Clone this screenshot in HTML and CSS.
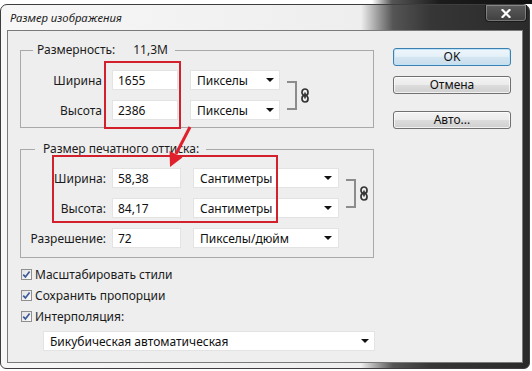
FILE: index.html
```html
<!DOCTYPE html>
<html lang="ru">
<head>
<meta charset="utf-8">
<title>Размер изображения</title>
<link rel="stylesheet" href="styles.css">
</head>
<body>
<div class="window">
  <div class="titlebar">
    <div class="title">Размер изображения</div>
    <div class="close"><svg width="10" height="9" viewBox="0 0 10 9"><path d="M1.5 1 L8.5 8 M8.5 1 L1.5 8" stroke="#fff" stroke-width="2.2" stroke-linecap="square"/></svg></div>
  </div>
  <div class="client">
    <div class="left">
      <fieldset class="group g1">
        <legend class="leg1">Размерность:<span class="val">11,3M</span></legend>
        <div class="grid grid1">
          <div class="lbl lbl-nc">Ширина</div>
          <input class="field f1" value="1655">
          <div class="select s1"><span>Пикселы</span><i class="arrow"></i></div>
          <div class="link l1"><div class="bracket"></div><svg class="chain" width="8" height="15" viewBox="0 0 8 15"><rect x="1" y="1" width="6" height="6.6" rx="3" fill="none" stroke="#333" stroke-width="1.7"/><rect x="1" y="7.4" width="6" height="6.6" rx="3" fill="none" stroke="#333" stroke-width="1.7"/><path d="M4 4.5 V10.5" stroke="#333" stroke-width="1.6"/></svg></div>
          <div class="lbl lbl-nc">Высота</div>
          <input class="field f1" value="2386">
          <div class="select s1"><span>Пикселы</span><i class="arrow"></i></div>
        </div>
      </fieldset>
      <fieldset class="group g2">
        <legend class="leg2">Размер печатного оттиска:</legend>
        <div class="grid grid2">
          <div class="lbl">Ширина:</div>
          <input class="field f2" value="58,38">
          <div class="select s2"><span>Сантиметры</span><i class="arrow"></i></div>
          <div class="link l2"><div class="bracket"></div><svg class="chain" width="8" height="15" viewBox="0 0 8 15"><rect x="1" y="1" width="6" height="6.6" rx="3" fill="none" stroke="#333" stroke-width="1.7"/><rect x="1" y="7.4" width="6" height="6.6" rx="3" fill="none" stroke="#333" stroke-width="1.7"/><path d="M4 4.5 V10.5" stroke="#333" stroke-width="1.6"/></svg></div>
          <div class="lbl">Высота:</div>
          <input class="field f2" value="84,17">
          <div class="select s2"><span>Сантиметры</span><i class="arrow"></i></div>
          <div class="lbl">Разрешение:</div>
          <input class="field f2" value="72">
          <div class="select s2"><span>Пикселы/дюйм</span><i class="arrow"></i></div>
        </div>
      </fieldset>
      <div class="checks">
        <div class="check"><span class="box"><svg width="11" height="11" viewBox="0 0 11 11"><path d="M2.2 5.6 L4.4 7.9 L8.6 2.4" fill="none" stroke="#3d5a9a" stroke-width="1.7"/></svg></span>Масштабировать стили</div>
        <div class="check"><span class="box"><svg width="11" height="11" viewBox="0 0 11 11"><path d="M2.2 5.6 L4.4 7.9 L8.6 2.4" fill="none" stroke="#3d5a9a" stroke-width="1.7"/></svg></span>Сохранить пропорции</div>
        <div class="check"><span class="box"><svg width="11" height="11" viewBox="0 0 11 11"><path d="M2.2 5.6 L4.4 7.9 L8.6 2.4" fill="none" stroke="#3d5a9a" stroke-width="1.7"/></svg></span>Интерполяция:</div>
      </div>
      <div class="select s3"><span>Бикубическая автоматическая</span><i class="arrow"></i></div>
    </div>
    <div class="right">
      <div class="btn ok">OK</div>
      <div class="btn cancel">Отмена</div>
      <div class="btn auto">Авто...</div>
    </div>
    <svg class="marks" width="514" height="331" viewBox="0 0 514 331">
      <rect x="97" y="31" width="75" height="66" fill="none" stroke="#d2202c" stroke-width="2"/>
      <rect x="45" y="125" width="224" height="66" fill="none" stroke="#d2202c" stroke-width="2"/>
      <path d="M182 96 L168 123" stroke="#e0212b" stroke-width="3"/>
      <path d="M162 136 L161.5 120 L174.5 126.5 Z" fill="#e0212b"/>
    </svg>
  </div>
</div>
</body>
</html>
```
FILE: styles.css
```css
html { background: #fff; }
body {
  margin: 0;
  padding-top: 4px;
  font-family: "Noto Sans", sans-serif;
  font-size: 12px;
  color: #1b1b1b;
  background: linear-gradient(to right, #fff 0, #fff 372px, #555 392px, #1c1c1c 440px, #111 100%) top left / 100% 4px no-repeat;
}
.window {
  width: 530px;
  height: 365px;
  box-sizing: border-box;
  border: 1px solid #3e3e3e;
  border-radius: 7px 7px 6px 6px;
  background: linear-gradient(to right, #f7f7f7 0, #eeeeee 360px, #a0a0a0 376px, #555 392px, #363636 430px, #2a2a2a 100%);
  display: flex;
  flex-direction: column;
}
.titlebar { height: 25px; display: flex; flex-shrink: 0; }
.title {
  font-style: italic;
  font-size: 11.3px;
  line-height: 25px;
  padding-left: 9px;
  color: #1e1e1e;
}
.close {
  margin-left: auto;
  margin-right: 2px;
  width: 42px;
  height: 17px;
  box-sizing: border-box;
  border: 1px solid #1a1a1a;
  border-top: 0;
  border-radius: 0 0 4px 4px;
  box-shadow: inset 0 0 0 1px rgba(255,255,255,0.28);
  background: linear-gradient(#5c5c5c, #404040);
  display: flex;
  align-items: center;
  justify-content: center;
}
.client {
  position: relative;
  margin: 0 6px;
  height: 333px;
  box-sizing: border-box;
  border: 1px solid #7a7a7a;
  background: #eeeeee;
  display: flex;
  padding: 11px 0 0 12px;
}
.left { width: 356px; }
.right {
  margin-left: 17px;
  padding-top: 6px;
  width: 118px;
  display: flex;
  flex-direction: column;
}
.group {
  margin: 0;
  width: 354px;
  box-sizing: border-box;
  border: 1px solid #a9a9a9;
  min-width: 0;
}
.g1 { padding: 12px 0 7px 0; }
.g2 { padding: 11px 0 9px 0; margin-top: 13px; }
legend { line-height: 16px; height: 16px; }
.leg1 { margin-left: 12px; padding: 0 7px 0 4px; }
.leg1 .val { margin-left: 18px; }
.leg2 { margin-left: 14px; padding: 0 7px 0 8px; }
.grid {
  display: grid;
  grid-auto-rows: 20px;
  row-gap: 10px;
  align-items: center;
}
.grid1 { grid-template-columns: 85px 72px 102px auto; }
.grid2 { grid-template-columns: 85px 78px 154px auto; }
.lbl { text-align: right; white-space: nowrap; }
.lbl-nc { padding-right: 4px; }
.field {
  margin: 0 0 0 6px;
  height: 20px;
  box-sizing: border-box;
  border: 1px solid #e3e3e3;
  background: #fff;
  font: inherit;
  color: #111;
  padding: 0 0 0 5px;
  outline: none;
}
.f1 { width: 66px; }
.f2 { width: 69px; }
.select {
  height: 20px;
  box-sizing: border-box;
  background: #fff;
  border: 1px solid #e3e3e3;
  display: flex;
  align-items: center;
  justify-content: space-between;
  padding: 0 5px 0 6px;
  color: #111;
  white-space: nowrap;
}
.s1 { width: 90px; margin-left: 12px; }
.s2 { width: 146px; margin-left: 9px; padding-right: 6px; }
.s3 { width: 332px; margin: 4px 0 0 23px; }
.arrow {
  width: 0;
  height: 0;
  border-left: 4px solid transparent;
  border-right: 4px solid transparent;
  border-top: 4px solid #111;
}
.link {
  grid-row: 1 / span 2;
  grid-column: 4;
  align-self: center;
  display: flex;
  align-items: center;
}
.l1 { margin-left: 7px; }
.l2 { margin-left: 8px; }
.bracket {
  width: 10px;
  height: 29px;
  box-sizing: border-box;
  border: 2px solid #8c8c8c;
  border-left: 0;
}
.chain { margin-left: 4px; }
.checks { margin-top: 6px; }
.check { display: flex; align-items: center; height: 21px; }
.box {
  width: 11px;
  height: 11px;
  box-sizing: border-box;
  margin: 0 3px 0 1px;
  border: 1px solid #8e8f8f;
  background: linear-gradient(135deg, #e3e3e3, #fafafa);
  display: flex;
  align-items: center;
  justify-content: center;
}
.box svg { flex-shrink: 0; }
.btn {
  height: 18px;
  box-sizing: border-box;
  border: 1px solid #707070;
  border-radius: 3px;
  background: linear-gradient(#f3f3f3 0, #ebebeb 50%, #dddddd 50%, #cfcfcf 100%);
  box-shadow: inset 0 0 0 1px rgba(255,255,255,0.7);
  line-height: 16px;
  text-align: center;
  color: #111;
}
.ok {
  border-color: #3c7fb1;
  background: linear-gradient(#eef6fb 0, #e3eff7 50%, #d4e6f2 50%, #c8dcea 100%);
  box-shadow: inset 0 0 0 1px #bfe3f6;
}
.cancel { margin-top: 10px; }
.auto { margin-top: 17px; }
.marks {
  position: absolute;
  left: 0;
  top: 0;
  pointer-events: none;
}
```
